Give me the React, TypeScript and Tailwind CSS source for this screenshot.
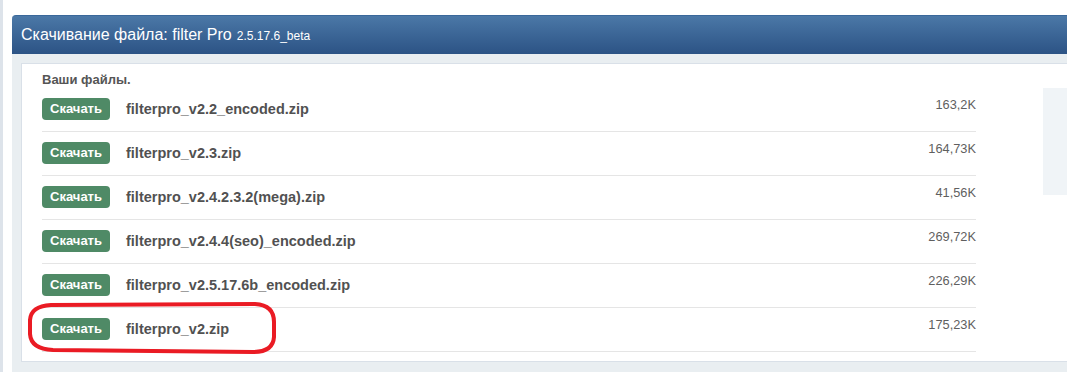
import React from 'react';

const files = [
  { name: 'filterpro_v2.2_encoded.zip', size: '163,2K' },
  { name: 'filterpro_v2.3.zip', size: '164,73K' },
  { name: 'filterpro_v2.4.2.3.2(mega).zip', size: '41,56K' },
  { name: 'filterpro_v2.4.4(seo)_encoded.zip', size: '269,72K' },
  { name: 'filterpro_v2.5.17.6b_encoded.zip', size: '226,29K' },
  { name: 'filterpro_v2.zip', size: '175,23K' },
];

export default function App() {
  return (
    <div
      className="relative w-[1067px] h-[372px] overflow-hidden bg-white border-l-[3px] border-[#dde3ea]"
      style={{ fontFamily: '"Liberation Sans", Arial, sans-serif' }}
    >
      <div className="ml-[9px] mt-[15px] w-[1100px]">
        <div className="h-[39px] flex items-center px-[9px] rounded-tl-[4px] border-t border-[#3a689a] bg-gradient-to-b from-[#4b78a7] to-[#2c5385] text-white">
          <span className="text-[16px] leading-none">Скачивание файла: filter Pro</span>
          <span className="text-[12px] leading-none ml-[5px] mt-[2px]">2.5.17.6_beta</span>
        </div>

        <div className="bg-[#e9eef1] pt-[9px] pl-[9px] pb-[11px]">
          <div className="bg-white border border-[#d9e0e8] flex pl-[20px] pt-[8px] pb-[9px]">
            <div className="w-[934px] shrink-0">
              <p className="text-[13px] leading-[16px] font-bold text-[#555]">Ваши файлы.</p>
              {files.map((f) => (
                <div
                  key={f.name}
                  className="flex items-start pt-[10px] pb-[11px] border-b border-[#e5e5e5]"
                >
                  <span className="w-[68px] h-[22px] rounded-[4px] bg-[#4f8a66] text-white text-[13px] font-bold leading-[22px] text-center shrink-0">
                    Скачать
                  </span>
                  <span className="ml-[16px] text-[14.5px] font-bold leading-[22px] text-[#515151]">
                    {f.name}
                  </span>
                  <span className="ml-auto -mt-[1px] text-[12.8px] leading-[16px] text-[#5f5f5f]">
                    {f.size}
                  </span>
                </div>
              ))}
            </div>
            <div className="ml-[67px] mt-[16px] w-[200px] h-[107px] bg-[#f0f4f7] shrink-0" />
          </div>
        </div>
      </div>

      <svg
        className="absolute left-0 top-0 pointer-events-none"
        width="1067"
        height="372"
        viewBox="0 0 1067 372"
      >
        <path
          d="M48 305 L252 304 Q271 305 271 322 L271 337 Q270 352 250 352 L50 350 Q28 349 27 334 L27 320 Q28 306 48 305 Z"
          fill="none"
          stroke="#ea1b24"
          strokeWidth="4"
        />
      </svg>
    </div>
  );
}
